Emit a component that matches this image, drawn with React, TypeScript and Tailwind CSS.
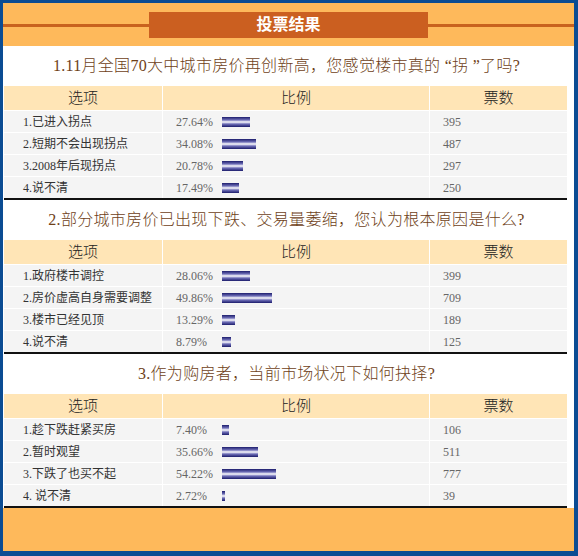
import React from "react";

type Row = { label: string; pct: string; votes: string };
type Section = { q: string; rows: Row[] };

const sections: Section[] = [
  {
    q: "1.11月全国70大中城市房价再创新高，您感觉楼市真的 “拐 ”了吗?",
    rows: [
      { label: "1.已进入拐点", pct: "27.64", votes: "395" },
      { label: "2.短期不会出现拐点", pct: "34.08", votes: "487" },
      { label: "3.2008年后现拐点", pct: "20.78", votes: "297" },
      { label: "4.说不清", pct: "17.49", votes: "250" },
    ],
  },
  {
    q: "2.部分城市房价已出现下跌、交易量萎缩，您认为根本原因是什么?",
    rows: [
      { label: "1.政府楼市调控", pct: "28.06", votes: "399" },
      { label: "2.房价虚高自身需要调整", pct: "49.86", votes: "709" },
      { label: "3.楼市已经见顶", pct: "13.29", votes: "189" },
      { label: "4.说不清", pct: "8.79", votes: "125" },
    ],
  },
  {
    q: "3.作为购房者，当前市场状况下如何抉择?",
    rows: [
      { label: "1.趁下跌赶紧买房", pct: "7.40", votes: "106" },
      { label: "2.暂时观望", pct: "35.66", votes: "511" },
      { label: "3.下跌了也买不起", pct: "54.22", votes: "777" },
      { label: "4. 说不清", pct: "2.72", votes: "39" },
    ],
  },
];

const font = {
  fontFamily: '"Liberation Serif", "Noto Sans CJK SC", serif',
};

function Poll({ s }: { s: Section }) {
  return (
    <div className="bg-white pl-[1px] pr-[7px]">
      <div className="h-[40px] flex items-center justify-center text-[16px] font-light text-[#6e3f18] pl-[2px] tracking-[0.3px]">
        {s.q}
      </div>
      <div className="grid grid-cols-[158px_266px_137px] gap-x-[1px]">
        <div className="h-[24px] bg-[#ffe5b6] flex items-center justify-center text-[15px] font-light text-[#222]">选项</div>
        <div className="h-[24px] bg-[#ffe5b6] flex items-center justify-center text-[15px] font-light text-[#222]">比例</div>
        <div className="h-[24px] bg-[#ffe5b6] flex items-center justify-center text-[15px] font-light text-[#222]">票数</div>
        {s.rows.map((r, i) => (
          <React.Fragment key={i}>
            <div className="h-[22px] bg-[#f4f4f4] border-t border-white flex items-center pl-[19px] text-[12px] text-[#333]">
              {r.label}
            </div>
            <div className="h-[22px] bg-[#f4f4f4] border-t border-white flex items-center pl-[13px] text-[12px] text-[#666]">
              <span className="w-[46px]">{r.pct}%</span>
              <span
                className="h-[10px] bg-[linear-gradient(to_bottom,#1c1c6c,#6f6fb8_30%,#ffffff_50%,#6f6fb8_70%,#1c1c6c)]"
                style={{ width: `${Math.max(2, Math.round(parseFloat(r.pct)))}px` }}
              />
            </div>
            <div className="h-[22px] bg-[#f4f4f4] border-t border-white flex items-center pl-[13px] text-[12px] text-[#666]">
              {r.votes}
            </div>
          </React.Fragment>
        ))}
      </div>
      <div className="h-[2px] bg-[#111]" />
    </div>
  );
}

export default function App() {
  return (
    <div
      className="w-[578px] h-[556px] bg-[#0b4c93] pt-[3px] pl-[3px] pr-[4px] pb-[5px]"
      style={font}
    >
      <div className="w-[571px] h-[548px] flex flex-col bg-[#feb95b]">
        <div className="h-[43px] relative flex items-start justify-center pt-[9px]">
          <div className="absolute left-0 right-0 top-[21px] h-[3px] bg-[#c9621e]" />
          <div className="relative w-[279px] h-[26px] bg-[#cb5f20] flex items-center justify-center text-white font-bold text-[16px]">
            投票结果
          </div>
        </div>
        {sections.map((s, i) => (
          <Poll key={i} s={s} />
        ))}
        <div className="flex-1" />
      </div>
    </div>
  );
}
